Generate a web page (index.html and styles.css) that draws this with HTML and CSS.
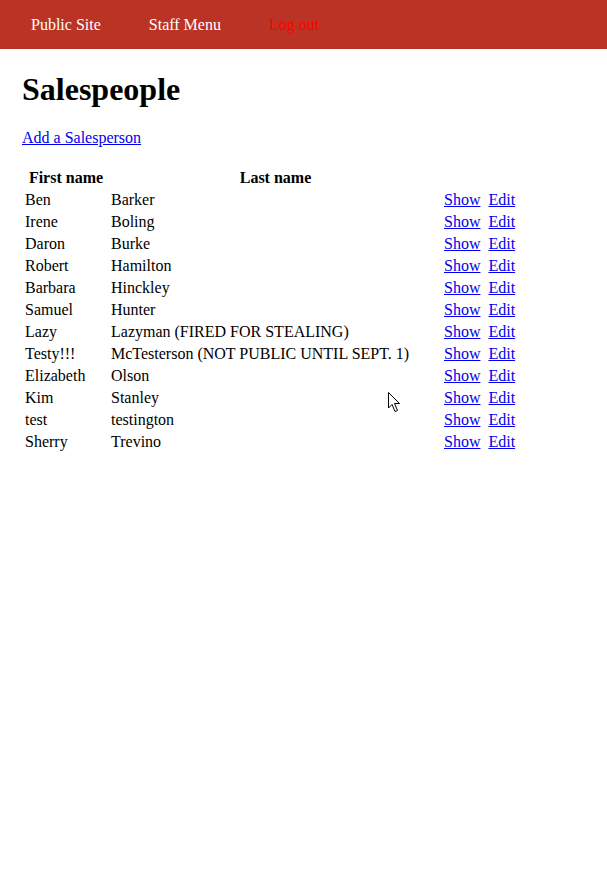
FILE: index.html
```html
<!DOCTYPE html>
<html>
<head>
<meta charset="utf-8">
<title>Salespeople</title>
<link rel="stylesheet" href="styles.css">
</head>
<body>
<header class="topbar">
  <nav class="nav">
    <a class="nav-link" href="#">Public Site</a>
    <a class="nav-link" href="#">Staff Menu</a>
    <a class="nav-link logout" href="#">Log out</a>
  </nav>
</header>
<main class="content">
  <h1 class="title">Salespeople</h1>
  <p class="add"><a href="#">Add a Salesperson</a></p>
  <table class="list">
    <thead>
      <tr><th class="c-first">First name</th><th class="c-last">Last name</th><th class="c-act"></th></tr>
    </thead>
    <tbody>
      <tr><td>Ben</td><td>Barker</td><td class="actions"><a href="#">Show</a><a href="#">Edit</a></td></tr>
      <tr><td>Irene</td><td>Boling</td><td class="actions"><a href="#">Show</a><a href="#">Edit</a></td></tr>
      <tr><td>Daron</td><td>Burke</td><td class="actions"><a href="#">Show</a><a href="#">Edit</a></td></tr>
      <tr><td>Robert</td><td>Hamilton</td><td class="actions"><a href="#">Show</a><a href="#">Edit</a></td></tr>
      <tr><td>Barbara</td><td>Hinckley</td><td class="actions"><a href="#">Show</a><a href="#">Edit</a></td></tr>
      <tr><td>Samuel</td><td>Hunter</td><td class="actions"><a href="#">Show</a><a href="#">Edit</a></td></tr>
      <tr><td>Lazy</td><td>Lazyman (FIRED FOR STEALING)</td><td class="actions"><a href="#">Show</a><a href="#">Edit</a></td></tr>
      <tr><td>Testy!!!</td><td>McTesterson (NOT PUBLIC UNTIL SEPT. 1)</td><td class="actions"><a href="#">Show</a><a href="#">Edit</a></td></tr>
      <tr><td>Elizabeth</td><td>Olson</td><td class="actions"><a href="#">Show</a><a href="#">Edit</a></td></tr>
      <tr><td>Kim</td><td>Stanley</td><td class="actions"><a href="#">Show</a><a href="#">Edit</a></td></tr>
      <tr><td>test</td><td>testington</td><td class="actions"><a href="#">Show</a><a href="#">Edit</a></td></tr>
      <tr><td>Sherry</td><td>Trevino</td><td class="actions"><a href="#">Show</a><a href="#">Edit</a></td></tr>
    </tbody>
  </table>
</main>
<svg class="cursor" width="14" height="22" viewBox="0 0 14 22" xmlns="http://www.w3.org/2000/svg">
  <path d="M0.5 0.5 L0.5 16 L4 12.5 L7 19.5 L9.5 18.5 L6.5 11.5 L11.5 11.5 Z" fill="#fff" stroke="#000" stroke-width="1"/>
</svg>
</body>
</html>
```
FILE: styles.css
```css
html, body {
  margin: 0;
  padding: 0;
  background: #fff;
  font-family: "Liberation Serif", "Times New Roman", serif;
  font-size: 16px;
  color: #000;
}
.topbar {
  background: #bb3324;
  height: 49px;
  display: flex;
  align-items: center;
}
.nav {
  display: flex;
  padding-left: 31px;
}
.nav-link {
  color: #fff;
  text-decoration: none;
  margin-right: 48px;
}
.nav-link.logout {
  color: #ff0000;
}
.content {
  padding: 0 22px;
}
.title {
  font-size: 32px;
  margin: 21.5px 0;
}
.add {
  margin: 16px 0 19px;
}
a {
  color: #0000ee;
}
.list {
  border-spacing: 2px;
}
.list th, .list td {
  padding: 1px;
  text-align: left;
}
.list th {
  text-align: center;
}
.c-first { width: 82px; }
.c-last { width: 329px; }
.actions a + a {
  margin-left: 8px;
}
.cursor {
  position: absolute;
  left: 388px;
  top: 392px;
}
```
